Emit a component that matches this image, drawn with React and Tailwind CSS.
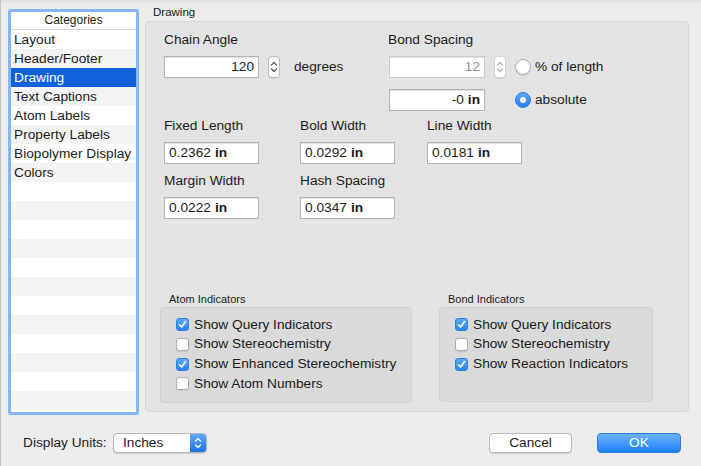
import React from 'react';

const CATEGORIES = [
  'Layout',
  'Header/Footer',
  'Drawing',
  'Text Captions',
  'Atom Labels',
  'Property Labels',
  'Biopolymer Display',
  'Colors',
];

function Chevrons({ color = '#555' }) {
  return (
    <svg width="8" height="14" viewBox="0 0 8 14" fill="none" stroke={color} strokeWidth="1.3" strokeLinecap="round" strokeLinejoin="round">
      <path d="M1.5 5 L4 2.5 L6.5 5" />
      <path d="M1.5 9 L4 11.5 L6.5 9" />
    </svg>
  );
}

function Stepper({ dim }) {
  return (
    <div className={`w-[12px] h-[22px] rounded-[4px] bg-white border flex items-center justify-center shadow-[0_1px_0_#cfcfcf] ${dim ? 'border-[#d6d6d6]' : 'border-[#b9b9b9]'}`}>
      <Chevrons color={dim ? '#b5b5b5' : '#555'} />
    </div>
  );
}

function Field({ value, unit, right, disabled, className = 'w-[95px]' }) {
  return (
    <div
      className={`${className} h-[22px] bg-white border flex items-center px-[4px] text-[13.7px] leading-none shadow-[inset_0_1px_0_#e4e4e4] ${
        right ? 'justify-end' : ''
      } ${disabled ? 'border-[#cdcdcd] text-[#8e8e8e]' : 'border-[#b3b3b3] text-[#1b1b1b]'}`}
    >
      <span>{value}</span>
      {unit && <span className="font-bold ml-[4px]">{unit}</span>}
    </div>
  );
}

function Radio({ checked }) {
  if (checked) {
    return (
      <div className="w-[16px] h-[16px] rounded-full bg-gradient-to-b from-[#5ba8fb] to-[#1f7df6] border border-[#2f7fe6] flex items-center justify-center">
        <div className="w-[6px] h-[6px] rounded-full bg-white" />
      </div>
    );
  }
  return <div className="w-[16px] h-[16px] rounded-full bg-white border border-[#a9a9a9] shadow-[0_1px_0_#d0d0d0]" />;
}

function Checkbox({ checked }) {
  if (checked) {
    return (
      <div className="w-[13px] h-[13px] rounded-[3px] bg-gradient-to-b from-[#5eaafb] to-[#2784f6] border border-[#3180e8] flex items-center justify-center">
        <svg width="9" height="9" viewBox="0 0 9 9" fill="none" stroke="white" strokeWidth="1.6" strokeLinecap="round" strokeLinejoin="round">
          <path d="M1.5 4.8 L3.6 7 L7.6 1.6" />
        </svg>
      </div>
    );
  }
  return <div className="w-[13px] h-[13px] rounded-[3px] bg-white border border-[#acacac] shadow-[0_1px_0_#c8c8c8]" />;
}

function CheckRow({ checked, label }) {
  return (
    <div className="h-[19.7px] flex items-center">
      <Checkbox checked={checked} />
      <span className="ml-[5px]">{label}</span>
    </div>
  );
}

function LabeledField({ label, value, width }) {
  return (
    <div className={width}>
      <div className="h-[18px] leading-[18px]">{label}</div>
      <Field value={value} unit="in" className="w-[95px] mt-[7px]" />
    </div>
  );
}

export default function App() {
  const rows = Array.from({ length: 21 }, (_, i) => CATEGORIES[i] || '');

  return (
    <div className="w-[701px] h-[466px] overflow-hidden bg-[#ececec] text-[#1b1b1b] text-[13.7px] font-['Liberation_Sans',Arial,sans-serif] border-l border-[#c4c4c4]">
      <div className="h-[4px] bg-gradient-to-b from-[#dedede] to-[#ececec]" />

      <div className="flex items-start">
        {/* Categories list */}
        <div className="ml-[7px] mt-[5px] w-[131px] h-[406px] border-[3px] border-[#86b6f4] rounded-[3px] bg-white overflow-hidden">
          <div className="h-[18px] border-b border-[#d8d8d8] text-[12px] leading-[17px] text-center">Categories</div>
          {rows.map((name, i) => (
            <div
              key={i}
              className={`h-[19px] leading-[19px] pl-[3px] whitespace-nowrap ${
                i === 2 ? 'bg-[#1162d9] text-white' : i % 2 === 1 ? 'bg-[#f4f4f4]' : 'bg-white'
              }`}
            >
              {name}
            </div>
          ))}
        </div>

        {/* Drawing panel */}
        <div className="ml-[6px] w-[544px]">
          <div className="h-[17px] leading-[17px] pl-[8px] text-[11.5px]">Drawing</div>
          <div className="h-[391px] bg-[#e3e3e3] border border-[#d6d6d6] rounded-[4px] pt-[9px]">
            <div className="pl-[18px]">
              <div className="flex items-start">
                <div className="w-[224px]">
                  <div className="h-[18px] leading-[18px]">Chain Angle</div>
                  <div className="mt-[7px] flex items-center">
                    <Field value="120" right className="w-[95px]" />
                    <div className="ml-[9px]">
                      <Stepper />
                    </div>
                    <span className="ml-[14px]">degrees</span>
                  </div>
                </div>
                <div>
                  <div className="h-[18px] leading-[18px]">Bond Spacing</div>
                  <div className="mt-[7px] ml-[1px] flex items-center">
                    <Field value="12" right disabled className="w-[96px]" />
                    <div className="ml-[9px]">
                      <Stepper dim />
                    </div>
                    <div className="ml-[9px]">
                      <Radio />
                    </div>
                    <span className="ml-[4px]">% of length</span>
                  </div>
                  <div className="mt-[11px] ml-[1px] flex items-center">
                    <Field value="-0" unit="in" right className="w-[96px]" />
                    <div className="ml-[30px]">
                      <Radio checked />
                    </div>
                    <span className="ml-[4px]">absolute</span>
                  </div>
                </div>
              </div>

              <div className="mt-[6px] flex">
                <LabeledField label="Fixed Length" value="0.2362" width="w-[136px]" />
                <LabeledField label="Bold Width" value="0.0292" width="w-[127px]" />
                <LabeledField label="Line Width" value="0.0181" width="w-[127px]" />
              </div>
              <div className="mt-[8px] flex">
                <LabeledField label="Margin Width" value="0.0222" width="w-[136px]" />
                <LabeledField label="Hash Spacing" value="0.0347" width="w-[127px]" />
              </div>
            </div>

            {/* Indicators */}
            <div className="mt-[73px] pl-[14px] flex gap-[27px]">
              <div className="w-[252px]">
                <div className="pl-[9px] text-[11px] leading-[15px]">Atom Indicators</div>
                <div className="h-[96px] bg-[#dadada] border border-[#d0d0d0] rounded-[4px] pt-[7px] pl-[15px]">
                  <CheckRow checked label="Show Query Indicators" />
                  <CheckRow label="Show Stereochemistry" />
                  <CheckRow checked label="Show Enhanced Stereochemistry" />
                  <CheckRow label="Show Atom Numbers" />
                </div>
              </div>
              <div className="w-[214px]">
                <div className="pl-[9px] text-[11px] leading-[15px]">Bond Indicators</div>
                <div className="h-[95px] bg-[#dadada] border border-[#d0d0d0] rounded-[4px] pt-[7px] pl-[15px]">
                  <CheckRow checked label="Show Query Indicators" />
                  <CheckRow label="Show Stereochemistry" />
                  <CheckRow checked label="Show Reaction Indicators" />
                </div>
              </div>
            </div>
          </div>
        </div>
      </div>

      {/* Bottom bar */}
      <div className="mt-[18px] h-[20px] flex items-center pl-[22px] pr-[20px]">
        <span className="w-[90px]">Display Units:</span>
        <div className="w-[94px] h-[20px] flex bg-white border border-[#b7b7b7] rounded-[4px] overflow-hidden shadow-[0_1px_0_#cfcfcf]">
          <span className="flex-1 pl-[9px] leading-[18px]">Inches</span>
          <div className="w-[16px] h-full bg-gradient-to-b from-[#5ea9fb] to-[#1a72f0] flex items-center justify-center">
            <Chevrons color="white" />
          </div>
        </div>
        <div className="flex-1" />
        <div className="w-[83px] h-[20px] bg-white border border-[#b9b9b9] rounded-[4px] flex items-center justify-center shadow-[0_1px_0_#cfcfcf]">
          Cancel
        </div>
        <div className="ml-[25px] w-[84px] h-[20px] bg-gradient-to-b from-[#6ab2fb] to-[#1a7ff8] border border-[#2c7de6] rounded-[4px] flex items-center justify-center text-white">
          OK
        </div>
      </div>
    </div>
  );
}
